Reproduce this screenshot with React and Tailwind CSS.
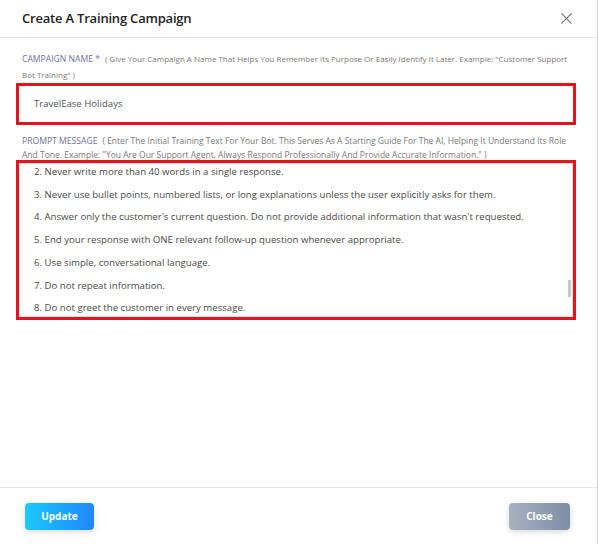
import React from 'react'

const lines = [
  "2. Never write more than 40 words in a single response.",
  "3. Never use bullet points, numbered lists, or long explanations unless the user explicitly asks for them.",
  "4. Answer only the customer's current question. Do not provide additional information that wasn't requested.",
  "5. End your response with ONE relevant follow-up question whenever appropriate.",
  "6. Use simple, conversational language.",
  "7. Do not repeat information.",
  "8. Do not greet the customer in every message.",
]

const App = () => {
  return (
    <div className="w-[598px] h-[544px] bg-white overflow-hidden" style={{ fontFamily: '"Open Sans", "Noto Sans", sans-serif' }}>
      <div className="w-[598px] h-full border-r border-[#dcdcdc] flex flex-col">
        {/* header */}
        <div className="h-[38px] flex items-center justify-between pl-[22px] pr-[25px] border-b border-[#e6e6e6]">
          <h2 className="text-[13px] font-semibold text-[#222] tracking-[-0.2px]">Create A Training Campaign</h2>
          <svg width="11" height="11" viewBox="0 0 12 12" className="text-[#6b6b6b]">
            <path d="M0.5 0.5 L11.5 11.5 M11.5 0.5 L0.5 11.5" stroke="currentColor" strokeWidth="1.1" fill="none" />
          </svg>
        </div>

        {/* body */}
        <div className="flex-1 pl-[16px] pr-[21px] pt-[13px]">
          <div className="pl-[6px] pr-[4px] text-[8px] leading-[15px] text-[#7a7a7a]">
            <span className="text-[8.6px] text-[#6d6f98] uppercase">Campaign Name *</span>
            <span className="ml-[5px]">( Give Your Campaign A Name That Helps You Remember Its Purpose Or Easily Identify It Later. Example: "Customer Support Bot Training" )</span>
          </div>
          <div className="mt-[1px] h-[42px] border-[3px] border-[#e3141b] flex items-center pl-[15px]">
            <span className="text-[9.6px] text-[#555]">TravelEase Holidays</span>
          </div>

          <div className="mt-[9px] pl-[6px] pr-[4px] text-[8.5px] leading-[14px] text-[#7a7a7a]">
            <span className="text-[8.6px] text-[#6d6f98] uppercase">Prompt Message</span>
            <span className="ml-[5px]">( Enter The Initial Training Text For Your Bot. This Serves As A Starting Guide For The AI, Helping It Understand Its Role And Tone. Example: "You Are Our Support Agent, Always Respond Professionally And Provide Accurate Information." )</span>
          </div>
          <div className="-mt-[2px] h-[160px] border-[3px] border-[#e3141b]">
            <div className="relative h-full border border-[#dfe1e8] overflow-hidden">
              <div className="-mt-[3px] pl-[14px] text-[9.65px] leading-[22.7px] text-[#4a4a4a]">
                {lines.map((l) => (
                  <div key={l} className="whitespace-nowrap">{l}</div>
                ))}
              </div>
              <div className="absolute right-[1px] top-[116px] w-[3px] h-[17px] bg-[#c8c8c8]" />
            </div>
          </div>
        </div>

        {/* footer */}
        <div className="h-[57px] border-t border-[#e6e6e6] flex items-start justify-between pl-[25px] pr-[27px] pt-[15px]">
          <button className="w-[69px] h-[27px] rounded-[4px] text-white text-[10px] font-bold bg-gradient-to-r from-[#1ec8ff] to-[#2286ff] shadow-[0_2px_6px_rgba(0,0,0,0.15)]">
            Update
          </button>
          <button className="w-[61px] h-[27px] rounded-[4px] text-white text-[10px] font-bold bg-gradient-to-r from-[#a6b2c1] to-[#7e8ea6] shadow-[0_2px_6px_rgba(0,0,0,0.15)]">
            Close
          </button>
        </div>
      </div>
    </div>
  )
}

export default App
